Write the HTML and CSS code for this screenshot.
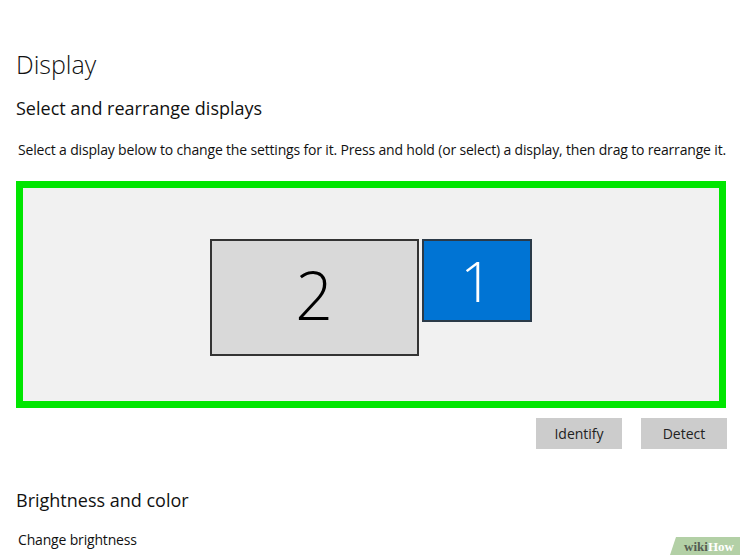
FILE: index.html
```html
<!DOCTYPE html>
<html>
<head>
<meta charset="utf-8">
<link rel="stylesheet" href="styles.css">
</head>
<body>
<main class="page">
  <h1 class="title">Display</h1>
  <h2 class="section">Select and rearrange displays</h2>
  <p class="desc">Select a display below to change the settings for it. Press and hold (or select) a display, then drag to rearrange it.</p>
  <div class="arrange">
    <div class="monitors">
      <div class="monitor mon2">2</div>
      <div class="monitor mon1">1</div>
    </div>
  </div>
  <div class="actions">
    <button class="btn">Identify</button>
    <button class="btn">Detect</button>
  </div>
  <h2 class="section bright">Brightness and color</h2>
  <p class="desc small">Change brightness</p>
</main>
<div class="wh"><span class="wiki">wiki</span><span class="how">How</span></div>
</body>
</html>
```
FILE: styles.css
```css
html, body {
  margin: 0;
  padding: 0;
  background: #ffffff;
}
body {
  width: 740px;
  height: 555px;
  overflow: hidden;
  position: relative;
  font-family: "Open Sans", "Noto Sans", sans-serif;
  color: #1a1a1a;
}
.page {
  padding: 47px 12px 0 16px;
}
.title {
  margin: 0;
  font-size: 25px;
  font-weight: 300;
  line-height: 34px;
  color: #111;
}
.section {
  margin: 0;
  margin-top: 14px;
  font-size: 18px;
  font-weight: 400;
  line-height: 26px;
  color: #111;
}
.desc {
  margin: 0;
  margin-top: 20px;
  padding-left: 2px;
  font-size: 14px;
  line-height: 18px;
  letter-spacing: -0.17px;
  color: #111;
}
.arrange {
  margin-top: 22px;
  width: 696px;
  height: 213px;
  border: 7px solid #00e600;
  background: #f1f1f1;
  display: flex;
  justify-content: center;
}
.monitors {
  display: flex;
  align-items: flex-start;
  gap: 3px;
  padding-top: 51px;
  margin-left: -1px;
}
.monitor {
  box-sizing: border-box;
  border: 2px solid #333;
  display: flex;
  justify-content: center;
  font-weight: 300;
  font-family: "Open Sans", "Noto Sans", sans-serif;
}
.mon2 {
  width: 209px;
  height: 117px;
  background: #d9d9d9;
  color: #000;
  font-size: 66px;
  line-height: 107px;
}
.mon1 {
  width: 110px;
  height: 83px;
  background: #0074d4;
  color: #fff;
  border-color: #2b3a48;
  font-size: 56px;
  line-height: 78px;
}
.actions {
  display: flex;
  justify-content: flex-end;
  gap: 19px;
  margin-top: 10px;
  width: 711px;
}
.btn {
  width: 86px;
  height: 31px;
  border: none;
  background: #cccccc;
  font-family: "Open Sans", "Noto Sans", sans-serif;
  font-size: 14px;
  color: #222;
  padding: 0;
}
.bright {
  margin-top: 38px;
}
.small {
  margin-top: 18px;
}
.wh {
  position: absolute;
  right: 0;
  bottom: 0;
  width: 62px;
  height: 18px;
  padding-left: 8px;
  background: #b3d0a6;
  clip-path: polygon(6px 0, 100% 0, 100% 100%, 0 100%);
  font-family: "Liberation Serif", serif;
  font-weight: bold;
  font-size: 13px;
  line-height: 19px;
  text-align: center;
}
.wiki { color: #555d52; }
.how { color: #fff; }
```
